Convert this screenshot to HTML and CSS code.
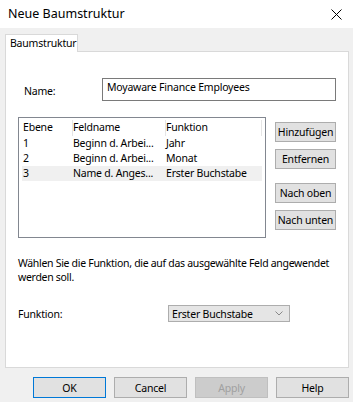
FILE: index.html
```html
<!DOCTYPE html>
<html lang="de">
<head>
  <meta charset="UTF-8">
  <title>Neue Baumstruktur</title>
  <link rel="stylesheet" href="styles.css">
</head>
<body>
  <div class="titlebar">
    <span class="title">Neue Baumstruktur</span>
    <svg class="close" width="11" height="11" viewBox="0 0 11 11">
      <path d="M0.5 0.5 L10.5 10.5 M10.5 0.5 L0.5 10.5" stroke="#000" stroke-width="1"/>
    </svg>
  </div>

  <div class="dialog">
    <div class="tabs">
      <div class="tab active">Baumstruktur</div>
    </div>

    <div class="panel">
      <!-- Name -->
      <div class="name-row">
        <label class="name-label">Name:</label>
        <div class="textbox">Moyaware Finance Employees</div>
      </div>

      <!-- Level list and its buttons -->
      <div class="list-row">
        <div class="listview">
          <div class="lv-row lv-head">
            <span class="c1">Ebene</span>
            <span class="c2">Feldname</span>
            <span class="c3">Funktion</span>
          </div>
          <div class="lv-row">
            <span class="c1">1</span>
            <span class="c2">Beginn d. Arbei...</span>
            <span class="c3">Jahr</span>
          </div>
          <div class="lv-row">
            <span class="c1">2</span>
            <span class="c2">Beginn d. Arbei...</span>
            <span class="c3">Monat</span>
          </div>
          <div class="lv-row selected">
            <span class="c1">3</span>
            <span class="c2">Name d. Anges...</span>
            <span class="c3">Erster Buchstabe</span>
          </div>
        </div>
        <div class="side-buttons">
          <button class="btn">Hinzufügen</button>
          <button class="btn">Entfernen</button>
          <button class="btn gap-top">Nach oben</button>
          <button class="btn">Nach unten</button>
        </div>
      </div>

      <p class="hint">Wählen Sie die Funktion, die auf das ausgewählte Feld angewendet<br>werden soll.</p>

      <div class="func-row">
        <label class="func-label">Funktion:</label>
        <div class="combo">
          <span>Erster Buchstabe</span>
          <svg width="8" height="5" viewBox="0 0 8 5">
            <path d="M0.5 0.5 L4 4 L7.5 0.5" fill="none" stroke="#888" stroke-width="1"/>
          </svg>
        </div>
      </div>
    </div>

    <!-- Dialog buttons -->
    <div class="footer">
      <button class="btn dlg default">OK</button>
      <button class="btn dlg">Cancel</button>
      <button class="btn dlg disabled">Apply</button>
      <button class="btn dlg">Help</button>
    </div>
  </div>
</body>
</html>
```

FILE: styles.css
```css
  body {
    margin: 0; padding: 0;
    width: 353px; height: 402px;
    background-color: #f0f0f0;
    font-family: "Noto Sans", "Liberation Sans", sans-serif;
    font-size: 10.5px;
    letter-spacing: -0.2px;
    color: #000;
    overflow: hidden;
  }
  .titlebar {
    display: flex;
    align-items: center;
    justify-content: space-between;
    height: 28px;
    padding: 0 8px 0 8px;
    background-color: #fff;
    box-sizing: border-box;
  }
  .title {
    font-size: 12.5px;
    letter-spacing: 0;
    margin-top: -1px;
  }
  .close {
    margin-right: 3px;
  }

  .dialog {
    padding: 6px 4px 0 5px;
  }
  /* Tab strip */
  .tabs {
    display: flex;
    height: 17px;
  }
  .tab {
    padding: 1px 5px 0 4px;
    background-color: #fff;
    border: 1px solid #d9d9d9;
    border-bottom: none;
    position: relative;
    z-index: 1;
    height: 18px;
    box-sizing: border-box;
    width: 73px;
  }
  .panel {
    height: 317px;
    background-color: #fff;
    border: 1px solid #d9d9d9;
    box-sizing: border-box;
    padding: 26px 12px 0 12px;
  }

  /* Name row */
  .name-row {
    display: flex;
    align-items: center;
    height: 23px;
  }
  .name-label {
    width: 79px;
    padding-left: 6px;
    padding-top: 3px;
  }
  .textbox {
    flex: 0 0 234px;
    height: 23px;
    box-sizing: border-box;
    border: 1px solid #7a7a7a;
    padding: 1px 4px;
  }

  /* List + buttons */
  .list-row {
    display: flex;
    margin-top: 16px;
  }
  .listview {
    width: 248px;
    height: 121px;
    box-sizing: border-box;
    border: 1px solid #828790;
    padding: 2px 3px;
  }
  .lv-row {
    display: flex;
    height: 15px;
    line-height: 15px;
    padding-left: 1px;
  }
  .lv-row .c1 { width: 50px; }
  .lv-row .c2 { width: 93px; }
  .lv-row .c3 { flex: 1; }
  .lv-head {
    height: 16px;
  }
  .lv-head .c2, .lv-head .c3 {
    border-left: 1px solid #e5e5e5;
    margin-left: -1px;
  }
  .lv-head .c3 {
    border-right: 1px solid #e5e5e5;
  }
  .selected {
    background-color: #f0f0f0;
  }
  .side-buttons {
    display: flex;
    flex-direction: column;
    gap: 7px;
    margin-left: 9px;
    padding-top: 5px;
  }
  .btn {
    font: inherit;
    letter-spacing: inherit;
    color: #000;
    background-color: #e1e1e1;
    border: 1px solid #adadad;
    padding: 0;
    height: 20px;
    width: 61px;
    box-sizing: border-box;
  }
  .side-buttons .gap-top {
    margin-top: 7px;
  }

  .hint {
    margin: 18px -11px 0 0;
    line-height: 14px;
    letter-spacing: -0.3px;
    white-space: nowrap;
  }

  .func-row {
    display: flex;
    align-items: center;
    margin-top: 21px;
  }
  .func-label {
    width: 150px;
  }
  .combo {
    display: flex;
    align-items: center;
    justify-content: space-between;
    width: 122px;
    height: 17px;
    box-sizing: border-box;
    border: 1px solid #adadad;
    background-color: #e5e5e5;
    padding: 0 6px 0 3px;
  }

  .footer {
    display: flex;
    justify-content: flex-end;
    gap: 8px;
    margin-top: 9px;
  }
  .btn.dlg {
    width: 73px;
    height: 21px;
  }
  .btn.default {
    border: 1px solid #0078d7;
  }
  .btn.disabled {
    color: #a0a0a0;
    background-color: #cccccc;
    border-color: #bfbfbf;
  }
```
